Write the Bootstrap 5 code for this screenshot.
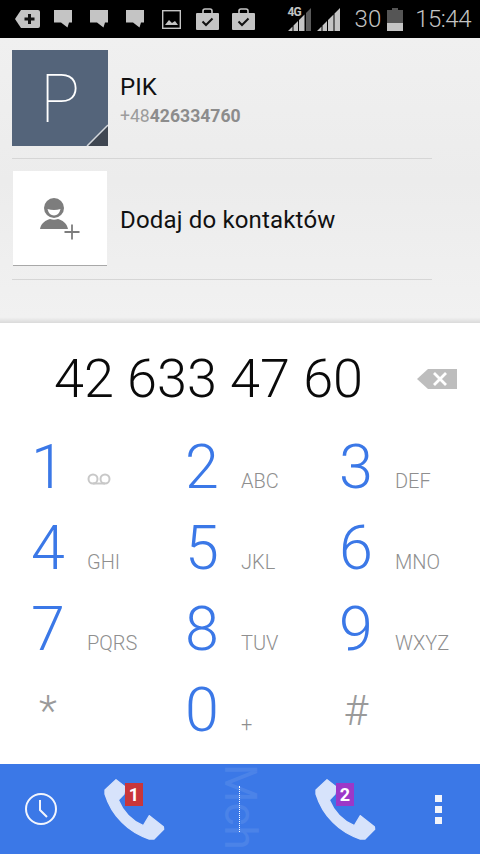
<!DOCTYPE html>
<html lang="pl">
<head>
<meta charset="utf-8">
<title>Telefon</title>
<link href="https://cdn.jsdelivr.net/npm/bootstrap@5.3.0/dist/css/bootstrap.min.css" rel="stylesheet">
<style>
html,body{width:480px;height:854px;overflow:hidden;margin:0;}
body{font-family:Roboto,"Liberation Sans",sans-serif;background:#fff;position:relative;}
.sbar{height:38px;background:#000;padding-left:9px;color:#bdbdbd;}
.sslot{width:36px;height:38px;display:flex;align-items:center;justify-content:center;}
.stxt{font-size:24px;font-weight:300;line-height:38px;color:#c4c4c4;}
.snum{margin-left:15px;}
.sbat{margin-left:6px;}
.stime{margin-left:12px;margin-right:9px;letter-spacing:-.5px;}
.sig{overflow:visible;}
.sig4g{position:absolute;right:179px;top:6px;font-size:12px;line-height:12px;font-weight:700;letter-spacing:-.8px;color:#c4c4c4;}
.toppane{height:285px;background:linear-gradient(#f0f0f0,#ececec 50%,#f1f1f1 98%,#dadada);padding:12px 48px 0 12px;}
.crow{border-bottom:1px solid #d6d6d6;}
.crow-a{height:109px;padding-bottom:12px;}
.crow-b{height:121px;padding-top:12px;}
.tile{width:96px;height:96px;flex:none;position:relative;overflow:hidden;}
.tile-p{background:#54647a;color:#fff;font-weight:100;font-size:66px;line-height:100px;text-align:center;}
.tile-a{background:#fff;border-bottom:1px solid #a8a8a8;margin-left:1px;width:94px;height:95px;display:flex;align-items:center;justify-content:center;}
.corner{position:absolute;right:0;bottom:0;}
.cname{margin-left:12px;padding-top:23px;}
.tname{font-size:24px;line-height:28px;color:#111;}
.tnum{font-size:17.600px;line-height:30px;color:#9c9c9c;font-weight:400;}
.tnum b{font-weight:700;color:#8c8c8c;}
.tadd{margin-left:13px;font-size:24px;letter-spacing:.17px;color:#111;padding-bottom:10px;}
.numline{height:107px;padding:4px 23px 0 54px;}
.bignum{font-size:54px;font-weight:300;color:#0a0a0a;line-height:100px;white-space:nowrap;}
.keys{display:grid;grid-template-columns:154px 154px 172px;grid-auto-rows:81px;height:334px;}
.kcell{display:flex;align-items:baseline;height:81px;}
.kdig{width:87px;text-align:center;padding-left:9px;font-size:61px;font-weight:300;line-height:75px;color:#3b78e7;}
.kdig-s{color:#9a9a9a;font-size:42px;line-height:75px;font-weight:300;}
.klab{font-size:20px;font-weight:300;color:#8f8f8f;line-height:1;}
.kvm{align-self:flex-start;margin-top:36px;}
.bbar{height:90px;background:#3b78e7;padding-left:24px;position:relative;overflow:hidden;}
.bclock{margin-right:42px;}
.bcall{position:relative;width:70px;height:70px;flex:none;}
.bbadge{position:absolute;left:25px;top:9px;width:18px;height:23px;color:#fff;font-size:18px;font-weight:700;line-height:23px;text-align:center;}
.b-red{background:#c8363a;}
.b-pur{background:#9c38c8;}
.gap2{margin-left:141px;}
.bdots{margin-left:54px;display:flex;flex-direction:column;gap:4px;}
.bdots span{width:7px;height:7px;background:#f2f4fa;display:block;}
.wmark{position:absolute;left:218px;top:0;writing-mode:vertical-rl;font-size:44px;line-height:44px;color:#fff;opacity:.08;white-space:nowrap;}
.wdots{position:absolute;left:239px;top:22px;height:46px;border-left:1px dotted #fff;}
</style>
</head>
<body>
<div class="sbar d-flex align-items-center">
  <span class="sslot"><svg width="26" height="20" viewBox="0 0 26 20"><path d="M1 10 7 1h17a2 2 0 0 1 2 2v14a2 2 0 0 1-2 2H7z" fill="#c4c4c4"/><path d="M13 9h3.500V5.500h3V9H23v3h-3.500v3.500h-3V12H13z" fill="#111" transform="translate(-2.500 -.5)"/></svg></span>
  <span class="sslot"><svg width="18" height="18" viewBox="0 0 18 18"><path d="M0 0h18v12.500h-3l-1.500 5-6.500-5H0z" fill="#c4c4c4"/></svg></span>
  <span class="sslot"><svg width="18" height="18" viewBox="0 0 18 18"><path d="M0 0h18v12.500h-3l-1.500 5-6.500-5H0z" fill="#c4c4c4"/></svg></span>
  <span class="sslot"><svg width="18" height="18" viewBox="0 0 18 18"><path d="M0 0h18v12.500h-3l-1.500 5-6.500-5H0z" fill="#c4c4c4"/></svg></span>
  <span class="sslot"><svg width="19" height="19" viewBox="0 0 19 19"><rect x=".7" y=".7" width="17.600" height="17.600" fill="none" stroke="#c4c4c4" stroke-width="1.400"/><path d="M3 15l4-5 3 3 3-2 3 4z" fill="#c4c4c4"/></svg></span>
  <span class="sslot"><svg width="23" height="22" viewBox="0 0 23 22"><path d="M7 5V3a2 2 0 0 1 2-2h5a2 2 0 0 1 2 2v2" fill="none" stroke="#c4c4c4" stroke-width="1.600"/><path d="M1 5h21a1 1 0 0 1 1 1v15a1 1 0 0 1-1 1H1a1 1 0 0 1-1-1V6a1 1 0 0 1 1-1z" fill="#c4c4c4"/><path d="M6.500 13.500l3.500 3.500 6.500-6.500" fill="none" stroke="#111" stroke-width="2"/></svg></span>
  <span class="sslot"><svg width="23" height="22" viewBox="0 0 23 22"><path d="M7 5V3a2 2 0 0 1 2-2h5a2 2 0 0 1 2 2v2" fill="none" stroke="#c4c4c4" stroke-width="1.600"/><path d="M1 5h21a1 1 0 0 1 1 1v15a1 1 0 0 1-1 1H1a1 1 0 0 1-1-1V6a1 1 0 0 1 1-1z" fill="#c4c4c4"/><path d="M6.500 13.500l3.500 3.500 6.500-6.500" fill="none" stroke="#111" stroke-width="2"/></svg></span>
  <span class="ms-auto d-flex align-items-center">
    <span class="sig4g">4G</span>
    <svg class="sig" width="54" height="23" viewBox="0 0 54 23"><path d="M2 23 6.500 18.500V23zM7.500 17.500 12 13V23H7.500zM13 12 18.500 6.500V23H13z" fill="#c4c4c4"/><path d="M20 5 25 0V23H20z" fill="#5a5a5a"/><path d="M31 23 35.500 18.500V23zM36.500 17.500 41 13V23H36.500zM42 12 47.500 6.500V23H42zM48.500 5.500 54 0V23H48.500z" fill="#c4c4c4"/></svg>
    <span class="stxt snum">30</span>
    <svg class="sbat" width="16" height="23" viewBox="0 0 16 23"><path d="M5 0h6v2h5v21H0V2h5z" fill="#555"/><rect y="15" width="16" height="8" fill="#c4c4c4"/></svg>
    <span class="stxt stime">15:44</span>
  </span>
</div>
<div class="toppane">
  <div class="crow crow-a d-flex align-items-start">
    <div class="tile tile-p">P
      <svg class="corner" width="22" height="22" viewBox="0 0 22 22"><path d="M22 2 2 22h20z" fill="#3f4651"/><path d="M22 1 1 22" stroke="#d5d8dc" stroke-width="1.500"/></svg>
    </div>
    <div class="cname">
      <div class="tname">PIK</div>
      <div class="tnum">+48<b>426334760</b></div>
    </div>
  </div>
  <div class="crow crow-b d-flex align-items-start">
    <div class="tile tile-a">
      <svg width="44" height="44" viewBox="0 0 44 44"><circle cx="16" cy="12" r="10" fill="#7d7d7d"/><path d="M9.500 13Q16 15 22.500 13 21 19.500 16 19.500 11 19.500 9.500 13z" fill="#fff"/><path d="M2 33c1-6 6-9 10-10 3 1 5 1 8 0 4 1 9 4 10 10z" fill="#7d7d7d"/><path d="M34 28.500v15M26.500 36h15" stroke="#7d7d7d" stroke-width="1.800"/></svg>
    </div>
    <div class="tadd align-self-center">Dodaj do kontaktów</div>
  </div>
</div>
<div class="numline d-flex align-items-center justify-content-between">
  <span class="bignum">42 633 47 60</span>
  <svg width="40" height="20" viewBox="0 0 40 20"><path d="M0 10 11 0h29v20H11z" fill="#bdbdbd"/><path d="M17 4l12 12M29 4 17 16" stroke="#fff" stroke-width="2.800"/></svg>
</div>
<div class="keys">
  <div class="kcell"><span class="kdig">1</span><span class="kvm"><svg width="24" height="12" viewBox="0 0 24 12"><circle cx="6" cy="6" r="4.500" fill="none" stroke="#c8c8c8" stroke-width="2"/><circle cx="18" cy="6" r="4.500" fill="none" stroke="#c8c8c8" stroke-width="2"/><path d="M6 10.500h12" stroke="#c8c8c8" stroke-width="2"/></svg></span></div>
  <div class="kcell"><span class="kdig">2</span><span class="klab">ABC</span></div>
  <div class="kcell"><span class="kdig">3</span><span class="klab">DEF</span></div>
  <div class="kcell"><span class="kdig">4</span><span class="klab">GHI</span></div>
  <div class="kcell"><span class="kdig">5</span><span class="klab">JKL</span></div>
  <div class="kcell"><span class="kdig">6</span><span class="klab">MNO</span></div>
  <div class="kcell"><span class="kdig">7</span><span class="klab">PQRS</span></div>
  <div class="kcell"><span class="kdig">8</span><span class="klab">TUV</span></div>
  <div class="kcell"><span class="kdig">9</span><span class="klab">WXYZ</span></div>
  <div class="kcell"><span class="kdig kdig-s">*</span></div>
  <div class="kcell"><span class="kdig">0</span><span class="klab">+</span></div>
  <div class="kcell"><span class="kdig kdig-s">#</span></div>
</div>
<div class="bbar d-flex align-items-center">
  <span class="wmark">Mch</span>
  <span class="wdots"></span>
  <svg class="bclock" width="34" height="34" viewBox="0 0 34 34"><circle cx="17" cy="17" r="15" fill="none" stroke="#f2f5fd" stroke-width="2"/><path d="M16 8v10l7 7" fill="none" stroke="#f2f5fd" stroke-width="2"/></svg>
  <div class="bcall">
    <svg width="70" height="70" viewBox="300 40 210 210"><path d="M348 57 375 78 372 100 355 118C370 155 395 180 430 195L448 165 490 198 491 206 462 235 448 235C385 215 335 165 315 100V88Z" fill="#d7e3fb" stroke="#d7e3fb" stroke-width="4" stroke-linejoin="round"/></svg>
    <span class="bbadge b-red">1</span>
  </div>
  <div class="bcall gap2">
    <svg width="70" height="70" viewBox="300 40 210 210"><path d="M348 57 375 78 372 100 355 118C370 155 395 180 430 195L448 165 490 198 491 206 462 235 448 235C385 215 335 165 315 100V88Z" fill="#d7e3fb" stroke="#d7e3fb" stroke-width="4" stroke-linejoin="round"/></svg>
    <span class="bbadge b-pur">2</span>
  </div>
  <div class="bdots"><span></span><span></span><span></span></div>
</div>
</body>
</html>
